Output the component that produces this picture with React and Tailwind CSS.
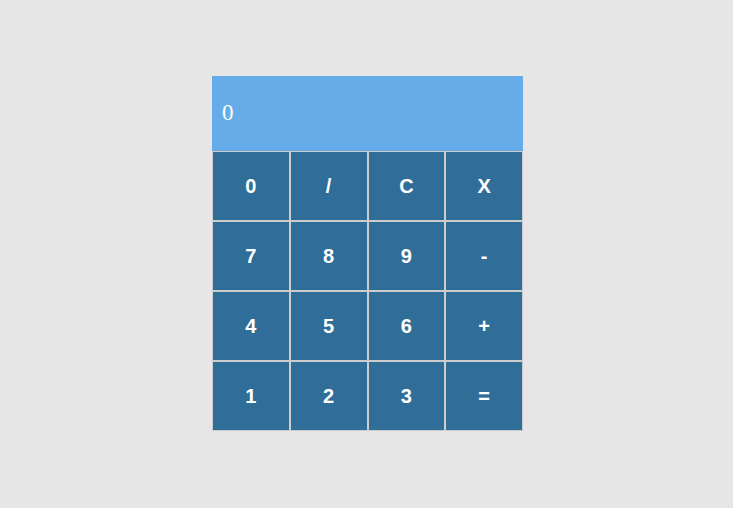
const KEYS = ['0', '/', 'C', 'X', '7', '8', '9', '-', '4', '5', '6', '+', '1', '2', '3', '=']

export default function App() {
  return (
    <div className="flex h-screen items-center justify-center bg-[#e6e6e6] pb-px pl-[2px]">
      <div className="w-[311px]">
        <div className="flex h-[75px] items-center bg-[#65ace8] pl-[10px] font-['Liberation_Serif',serif] text-[23px] text-white">
          0
        </div>
        <div className="grid grid-cols-4">
          {KEYS.map((key) => (
            <button
              key={key}
              type="button"
              className="h-[70px] border border-[#cccccc] bg-[#306e99] font-['Liberation_Sans',Arial,sans-serif] text-[20px] font-bold text-white"
            >
              {key}
            </button>
          ))}
        </div>
      </div>
    </div>
  )
}
